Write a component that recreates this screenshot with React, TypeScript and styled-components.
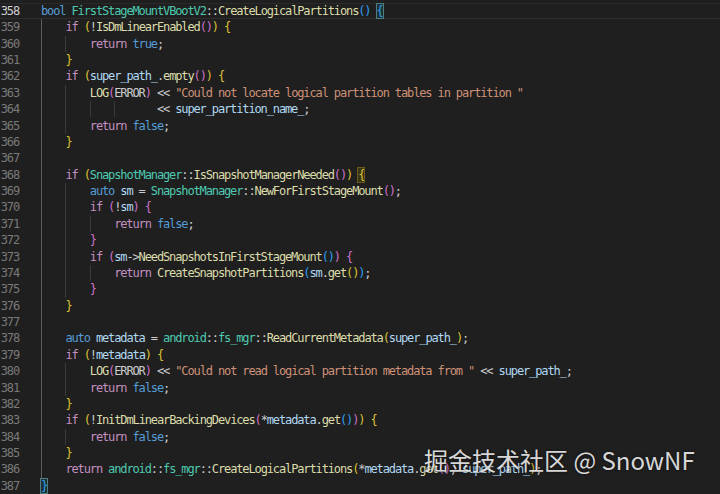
import React from "react";
import styled, { createGlobalStyle, css } from "styled-components";

const CH = 6.1;
const LINE_H = 16.38;

const GlobalStyle = createGlobalStyle`
  html, body { margin: 0; padding: 0; background: #1f1f1f; }
  #root { width: 720px; height: 494px; }
`;

const palette = {
  p: "#cccccc",
  kw: "#569cd6",
  ctl: "#c48fc0",
  type: "#4ec9b0",
  fn: "#dcdcaa",
  v: "#b0d8f2",
  str: "#ce9178",
  b1: "#ddc234",
  b2: "#cc72c8",
  b3: "#2a9ff0",
};
type Kind = keyof typeof palette;
type Tok = [string, Kind, ("box" | "gold")?];

const Editor = styled.div`
  position: relative;
  width: 720px;
  height: 494px;
  overflow: hidden;
  background: #1f1f1f;
  padding-top: 2.8px;
  box-sizing: border-box;
  font-family: "DejaVu Sans Mono", "Liberation Mono", monospace;
  font-size: 12px;
  letter-spacing: ${CH - 7.224}px;
`;

const Row = styled.div<{ $current?: boolean }>`
  display: flex;
  align-items: center;
  height: ${LINE_H}px;
  white-space: pre;
  box-sizing: border-box;
  ${(p) =>
    p.$current &&
    css`
      border-top: 1px solid #2a2a2a;
      border-bottom: 1px solid #2e2e2e;
    `}
`;

const LineNo = styled.span<{ $current?: boolean }>`
  flex: 0 0 19px;
  text-align: right;
  color: ${(p) => (p.$current ? "#d0d0d0" : "#7a7a7a")};
`;

const Code = styled.div`
  display: flex;
  align-items: center;
  height: 100%;
  margin-left: 22px;
`;

const Guide = styled.span<{ $active?: boolean }>`
  display: inline-block;
  align-self: stretch;
  width: ${CH * 4}px;
  flex: 0 0 ${CH * 4}px;
  box-sizing: border-box;
  border-left: 1px solid ${(p) => (p.$active ? "#5c5c5c" : "#3a3a3a")};
`;

const Tk = styled.span<{ $k: Kind; $box?: "box" | "gold" }>`
  color: ${(p) => palette[p.$k]};
  ${(p) =>
    p.$box === "box" &&
    css`
      outline: 1px solid #4f7c80;
      background: #1e3236;
    `}
  ${(p) =>
    p.$box === "gold" &&
    css`
      outline: 1px solid #6b5a1e;
      background: #3a3316;
    `}
`;

const Watermark = styled.div`
  position: absolute;
  left: 424px;
  top: 446px;
  font-family: "Noto Sans CJK SC", "Noto Sans", sans-serif;
  font-size: 24px;
  line-height: 28px;
  letter-spacing: 0;
  color: rgba(236, 236, 236, 0.92);
  text-shadow: 0 0 3px rgba(0, 0, 0, 0.6);
  white-space: pre;
`;

type Line = { n: number; indent: number; extra?: string; toks: Tok[] };

const retFalse: Tok[] = [["return", "ctl"], [" ", "p"], ["false", "kw"], [";", "p"]];

const lines: Line[] = [
  { n: 358, indent: 0, toks: [["bool", "kw"], [" ", "p"], ["FirstStageMountVBootV2", "type"], ["::", "p"], ["CreateLogicalPartitions", "fn"], ["()", "b3"], [" ", "p"], ["{", "b3", "box"]] },
  { n: 359, indent: 1, toks: [["if", "ctl"], [" ", "p"], ["(", "b1"], ["!", "p"], ["IsDmLinearEnabled", "fn"], ["()", "b2"], [")", "b1"], [" ", "p"], ["{", "b1"]] },
  { n: 360, indent: 2, toks: [["return", "ctl"], [" ", "p"], ["true", "kw"], [";", "p"]] },
  { n: 361, indent: 1, toks: [["}", "b1"]] },
  { n: 362, indent: 1, toks: [["if", "ctl"], [" ", "p"], ["(", "b1"], ["super_path_", "v"], [".", "p"], ["empty", "fn"], ["()", "b2"], [")", "b1"], [" ", "p"], ["{", "b1"]] },
  { n: 363, indent: 2, toks: [["LOG", "fn"], ["(", "b2"], ["ERROR", "p"], [")", "b2"], [" << ", "p"], ['"Could not locate logical partition tables in partition "', "str"]] },
  { n: 364, indent: 4, extra: "   ", toks: [["<< ", "p"], ["super_partition_name_", "v"], [";", "p"]] },
  { n: 365, indent: 2, toks: retFalse },
  { n: 366, indent: 1, toks: [["}", "b1"]] },
  { n: 367, indent: 1, toks: [] },
  { n: 368, indent: 1, toks: [["if", "ctl"], [" ", "p"], ["(", "b1"], ["SnapshotManager", "type"], ["::", "p"], ["IsSnapshotManagerNeeded", "fn"], ["()", "b2"], [")", "b1"], [" ", "p"], ["{", "b1", "gold"]] },
  { n: 369, indent: 2, toks: [["auto", "kw"], [" ", "p"], ["sm", "v"], [" = ", "p"], ["SnapshotManager", "type"], ["::", "p"], ["NewForFirstStageMount", "fn"], ["()", "b2"], [";", "p"]] },
  { n: 370, indent: 2, toks: [["if", "ctl"], [" ", "p"], ["(", "b2"], ["!", "p"], ["sm", "v"], [")", "b2"], [" ", "p"], ["{", "b2"]] },
  { n: 371, indent: 3, toks: retFalse },
  { n: 372, indent: 2, toks: [["}", "b2"]] },
  { n: 373, indent: 2, toks: [["if", "ctl"], [" ", "p"], ["(", "b2"], ["sm", "v"], ["->", "p"], ["NeedSnapshotsInFirstStageMount", "fn"], ["()", "b3"], [")", "b2"], [" ", "p"], ["{", "b2"]] },
  { n: 374, indent: 3, toks: [["return", "ctl"], [" ", "p"], ["CreateSnapshotPartitions", "fn"], ["(", "b3"], ["sm", "v"], [".", "p"], ["get", "fn"], ["()", "b1"], [")", "b3"], [";", "p"]] },
  { n: 375, indent: 2, toks: [["}", "b2"]] },
  { n: 376, indent: 1, toks: [["}", "b1"]] },
  { n: 377, indent: 1, toks: [] },
  { n: 378, indent: 1, toks: [["auto", "kw"], [" ", "p"], ["metadata", "v"], [" = ", "p"], ["android", "type"], ["::", "p"], ["fs_mgr", "type"], ["::", "p"], ["ReadCurrentMetadata", "fn"], ["(", "b1"], ["super_path_", "v"], [")", "b1"], [";", "p"]] },
  { n: 379, indent: 1, toks: [["if", "ctl"], [" ", "p"], ["(", "b1"], ["!", "p"], ["metadata", "v"], [")", "b1"], [" ", "p"], ["{", "b1"]] },
  { n: 380, indent: 2, toks: [["LOG", "fn"], ["(", "b2"], ["ERROR", "p"], [")", "b2"], [" << ", "p"], ['"Could not read logical partition metadata from "', "str"], [" << ", "p"], ["super_path_", "v"], [";", "p"]] },
  { n: 381, indent: 2, toks: retFalse },
  { n: 382, indent: 1, toks: [["}", "b1"]] },
  { n: 383, indent: 1, toks: [["if", "ctl"], [" ", "p"], ["(", "b1"], ["!", "p"], ["InitDmLinearBackingDevices", "fn"], ["(", "b2"], ["*", "p"], ["metadata", "v"], [".", "p"], ["get", "fn"], ["()", "b3"], [")", "b2"], [")", "b1"], [" ", "p"], ["{", "b1"]] },
  { n: 384, indent: 2, toks: retFalse },
  { n: 385, indent: 1, toks: [["}", "b1"]] },
  { n: 386, indent: 1, toks: [["return", "ctl"], [" ", "p"], ["android", "type"], ["::", "p"], ["fs_mgr", "type"], ["::", "p"], ["CreateLogicalPartitions", "fn"], ["(", "b1"], ["*", "p"], ["metadata", "v"], [".", "p"], ["get", "fn"], ["()", "b2"], [", ", "p"], ["super_path_", "v"], [")", "b1"], [";", "p"]] },
  { n: 387, indent: 0, toks: [["}", "b3", "box"]] },
];

export default function App() {
  return (
    <>
      <GlobalStyle />
      <Editor>
        {lines.map((l) => {
          const cur = l.n === 358;
          return (
            <Row key={l.n} $current={cur}>
              <LineNo $current={cur}>{l.n}</LineNo>
              <Code>
                {Array.from({ length: l.indent }).map((_, i) => (
                  <Guide key={i} $active={i === 0} />
                ))}
                {l.extra && <Tk $k="p">{l.extra}</Tk>}
                {l.toks.map((t, i) => (
                  <Tk key={i} $k={t[1]} $box={t[2]}>
                    {t[0]}
                  </Tk>
                ))}
              </Code>
            </Row>
          );
        })}
        <Watermark>掘金技术社区 @ SnowNF</Watermark>
      </Editor>
    </>
  );
}
